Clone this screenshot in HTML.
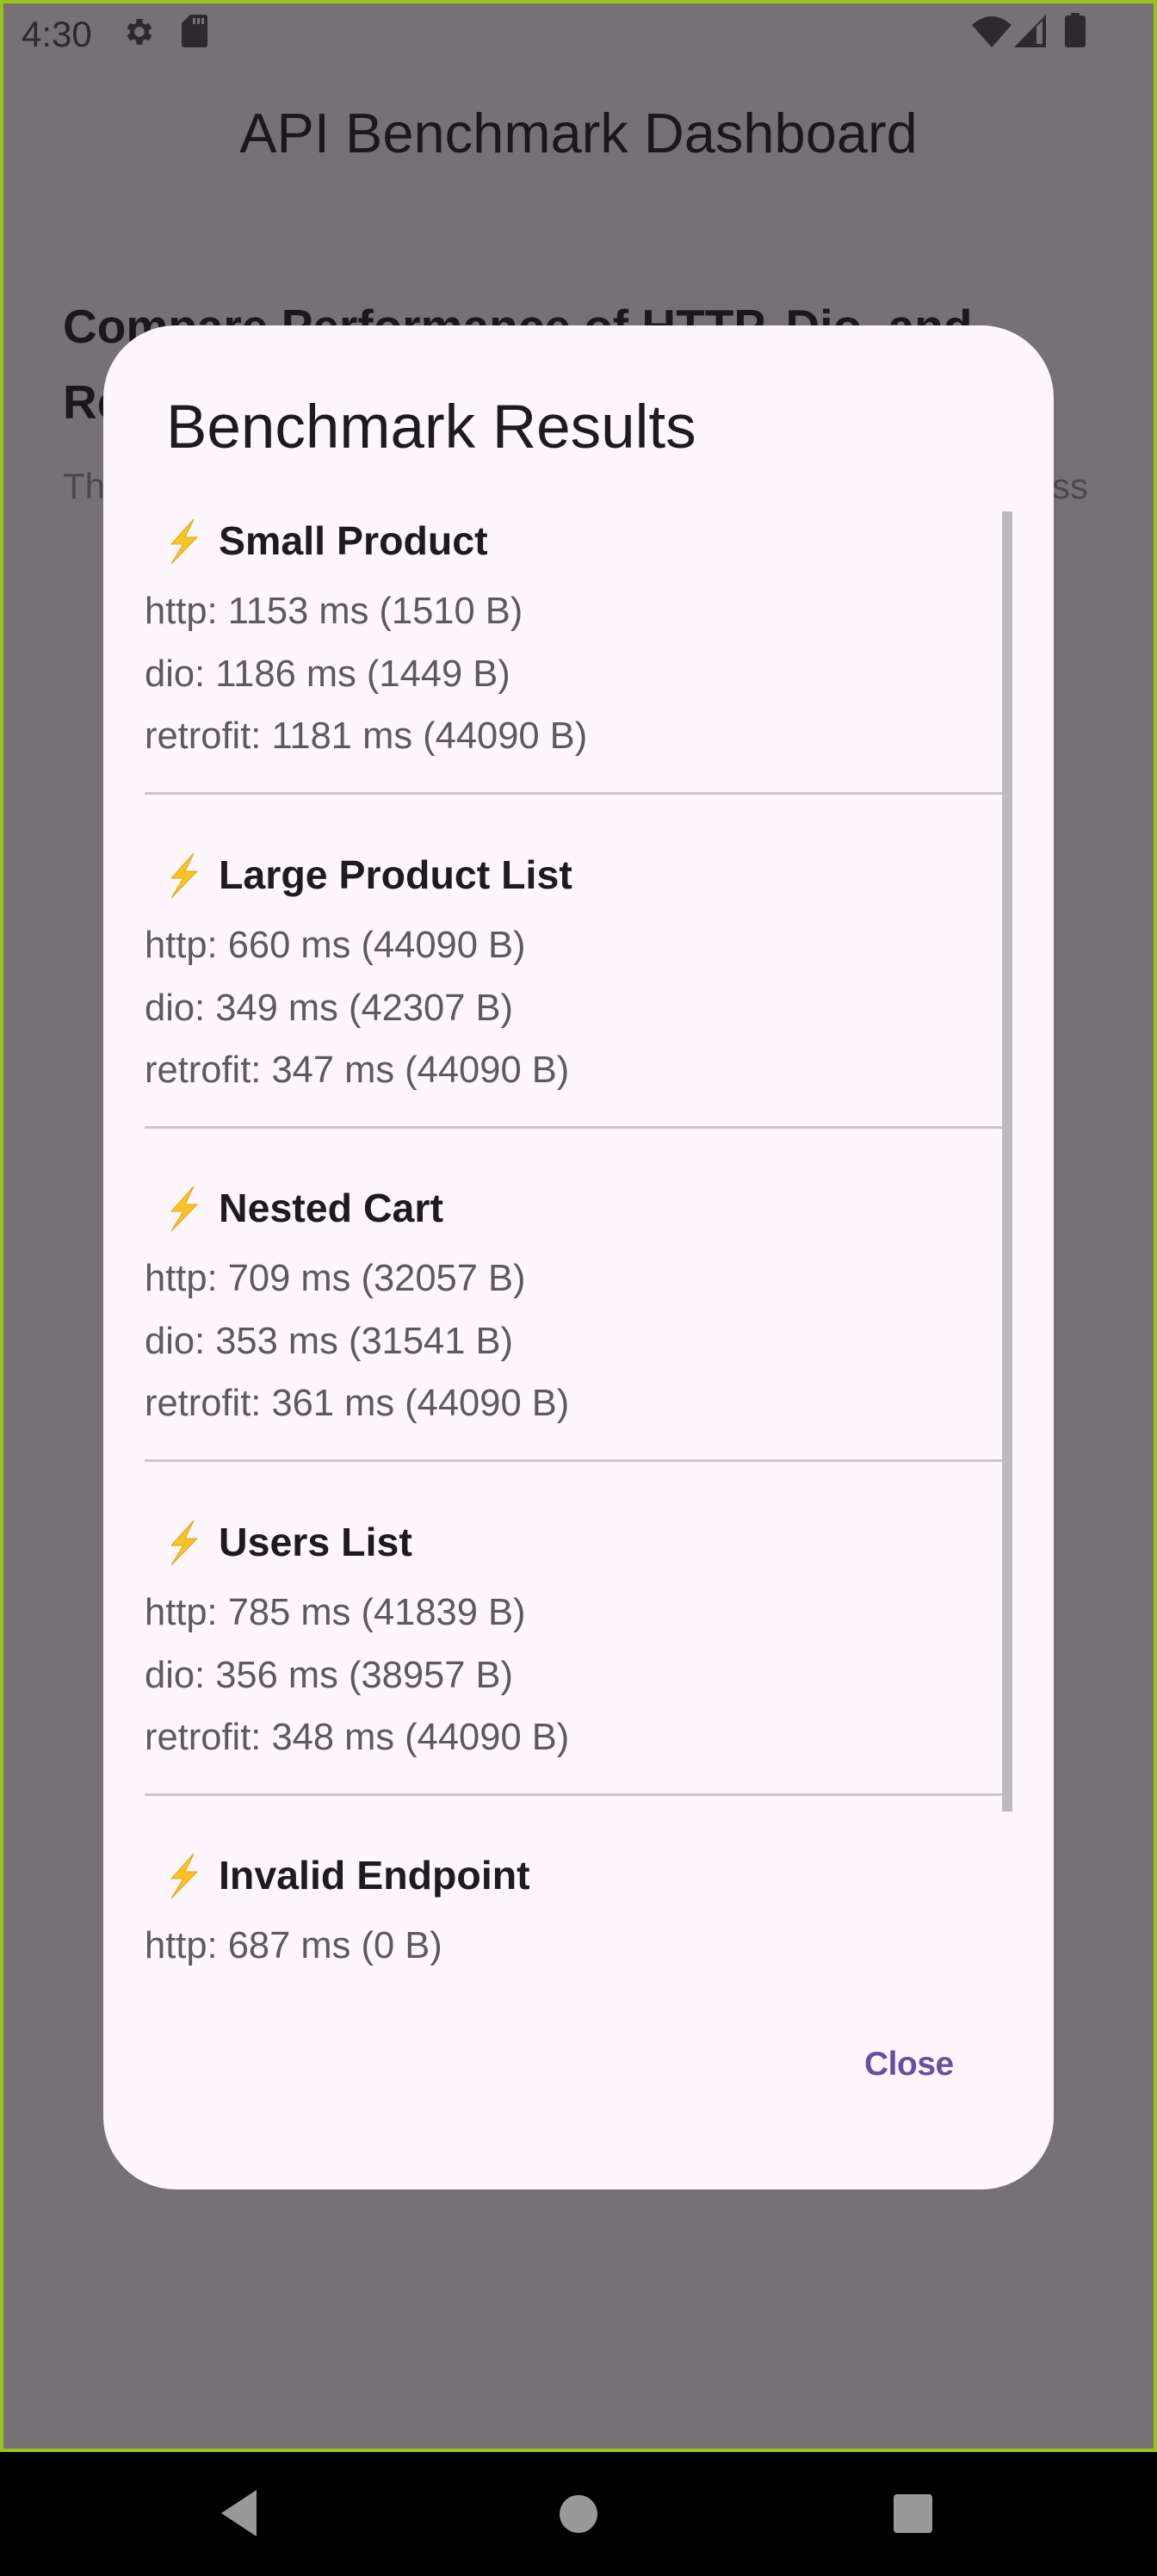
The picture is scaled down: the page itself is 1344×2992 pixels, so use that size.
<!DOCTYPE html>
<html><head><meta charset="utf-8"><style>
*{margin:0;padding:0;box-sizing:border-box}
html,body{width:1344px;height:2992px;overflow:hidden;background:#000;font-family:"Liberation Sans",sans-serif}
#scr{position:absolute;left:0;top:0;width:1344px;height:2848px;background:#767175;border:4px solid #9ac31c;overflow:hidden}
.a{position:absolute;white-space:nowrap}
#dlg{position:absolute;left:120px;top:378px;width:1104px;height:2165px;background:#fdf7fd;border-radius:84px;overflow:hidden}
.h{position:absolute;left:134px;font-weight:bold;font-size:46.5px;color:#1d1b20;line-height:60px;white-space:nowrap}
.h svg{position:absolute;left:-63px;top:4px}
.l{position:absolute;left:48px;font-size:43.5px;color:#5c5a5e;line-height:50px;white-space:nowrap}
.d{position:absolute;left:48px;width:996px;height:3px;background:#cac4cf}
</style></head><body>
<div id="scr">
<div class="a" style="left:21px;top:12px;font-size:42px;color:#2c2a2e;line-height:48px">4:30</div>
<svg class="a" style="left:138px;top:13px" width="40" height="40" viewBox="0 0 24 24"><path fill="#2c2a2e" d="M19.4 13a7.5 7.5 0 0 0 0-2l2.1-1.6-2-3.5-2.5 1a7 7 0 0 0-1.7-1L15 3h-4l-.4 2.9a7 7 0 0 0-1.7 1l-2.5-1-2 3.5L6.5 11a7.5 7.5 0 0 0 0 2l-2.1 1.6 2 3.5 2.5-1a7 7 0 0 0 1.7 1L11 21h4l.4-2.9a7 7 0 0 0 1.7-1l2.5 1 2-3.5zM13 15.5a3.5 3.5 0 1 1 0-7 3.5 3.5 0 0 1 0 7z" transform="translate(-1 0)"/></svg>
<svg class="a" style="left:207px;top:13px" width="30" height="38" viewBox="0 0 30 38"><path fill="#2c2a2e" d="M10 0h17a3 3 0 0 1 3 3v32a3 3 0 0 1-3 3H3a3 3 0 0 1-3-3V10z"/><rect x="13" y="4" width="3" height="7" fill="#767175"/><rect x="18" y="4" width="3" height="7" fill="#767175"/><rect x="23" y="4" width="3" height="7" fill="#767175"/></svg>
<svg class="a" style="left:1125px;top:13px" width="46" height="38" viewBox="0 0 46 38"><path fill="#2c2a2e" d="M0 12Q23-8 46 12L23 38z"/></svg>
<svg class="a" style="left:1174px;top:13px" width="38" height="38" viewBox="0 0 38 38"><path fill="#2c2a2e" d="M0 38L37 0V38z"/><path fill="#767175" d="M26 14L33 7V34H26z"/></svg>
<svg class="a" style="left:1233px;top:11px" width="24" height="40" viewBox="0 0 24 40"><rect x="7" y="0" width="10" height="4" fill="#2c2a2e"/><rect x="0" y="3" width="24" height="37" rx="3" fill="#2c2a2e"/></svg>
<div class="a" style="left:0;width:1336px;text-align:center;top:114px;font-size:65px;color:#1a181c;line-height:74px">API Benchmark Dashboard</div>
<div class="a" style="left:69px;top:340px;font-size:55px;font-weight:bold;color:#1a181c;line-height:70px">Compare Performance of HTTP, Dio, and</div>
<div class="a" style="left:69px;top:428px;font-size:55px;font-weight:bold;color:#1a181c;line-height:70px">Retrofit</div>
<div class="a" style="left:69px;top:536px;font-size:42px;color:#4b484c;line-height:50px">This</div>
<div class="a" style="left:1218px;top:536px;font-size:42px;color:#4b484c;line-height:50px">ss</div>
</div>

<div id="dlg">
<div class="a" style="left:73px;top:78px;font-size:71px;color:#1d1b20;line-height:82px">Benchmark Results</div>
<div class="a" style="left:1044px;top:216px;width:12px;height:1510px;background:#bdbabd"></div>

<div class="h" style="top:220px"><svg width="44" height="54" viewBox="0 0 44 54"><path fill="#f7c325" stroke="#e8a317" stroke-width="1" d="M34 1L8 30h14L8 53 38 22H24z"/></svg>Small Product</div>
<div class="l" style="top:307px">http: 1153 ms (1510 B)</div>
<div class="l" style="top:380px">dio: 1186 ms (1449 B)</div>
<div class="l" style="top:452px">retrofit: 1181 ms (44090 B)</div>
<div class="d" style="top:542px"></div>

<div class="h" style="top:608px"><svg width="44" height="54" viewBox="0 0 44 54"><path fill="#f7c325" stroke="#e8a317" stroke-width="1" d="M34 1L8 30h14L8 53 38 22H24z"/></svg>Large Product List</div>
<div class="l" style="top:695px">http: 660 ms (44090 B)</div>
<div class="l" style="top:768px">dio: 349 ms (42307 B)</div>
<div class="l" style="top:840px">retrofit: 347 ms (44090 B)</div>
<div class="d" style="top:930px"></div>

<div class="h" style="top:995px"><svg width="44" height="54" viewBox="0 0 44 54"><path fill="#f7c325" stroke="#e8a317" stroke-width="1" d="M34 1L8 30h14L8 53 38 22H24z"/></svg>Nested Cart</div>
<div class="l" style="top:1082px">http: 709 ms (32057 B)</div>
<div class="l" style="top:1155px">dio: 353 ms (31541 B)</div>
<div class="l" style="top:1227px">retrofit: 361 ms (44090 B)</div>
<div class="d" style="top:1317px"></div>

<div class="h" style="top:1383px"><svg width="44" height="54" viewBox="0 0 44 54"><path fill="#f7c325" stroke="#e8a317" stroke-width="1" d="M34 1L8 30h14L8 53 38 22H24z"/></svg>Users List</div>
<div class="l" style="top:1470px">http: 785 ms (41839 B)</div>
<div class="l" style="top:1543px">dio: 356 ms (38957 B)</div>
<div class="l" style="top:1615px">retrofit: 348 ms (44090 B)</div>
<div class="d" style="top:1705px"></div>

<div class="h" style="top:1770px"><svg width="44" height="54" viewBox="0 0 44 54"><path fill="#f7c325" stroke="#e8a317" stroke-width="1" d="M34 1L8 30h14L8 53 38 22H24z"/></svg>Invalid Endpoint</div>
<div class="l" style="top:1857px">http: 687 ms (0 B)</div>

<div class="a" style="left:884px;top:1997px;font-size:39px;color:#6750a4;line-height:46px;font-weight:bold;letter-spacing:-0.5px">Close</div>
</div>

<svg class="a" style="left:256px;top:2892px" width="44" height="54" viewBox="0 0 44 54"><path fill="#999" d="M42 0V54L1 27z"/></svg>
<div class="a" style="left:650px;top:2898px;width:44px;height:44px;border-radius:50%;background:#999"></div>
<div class="a" style="left:1038px;top:2897px;width:45px;height:45px;border-radius:4px;background:#999"></div>
</body></html>
